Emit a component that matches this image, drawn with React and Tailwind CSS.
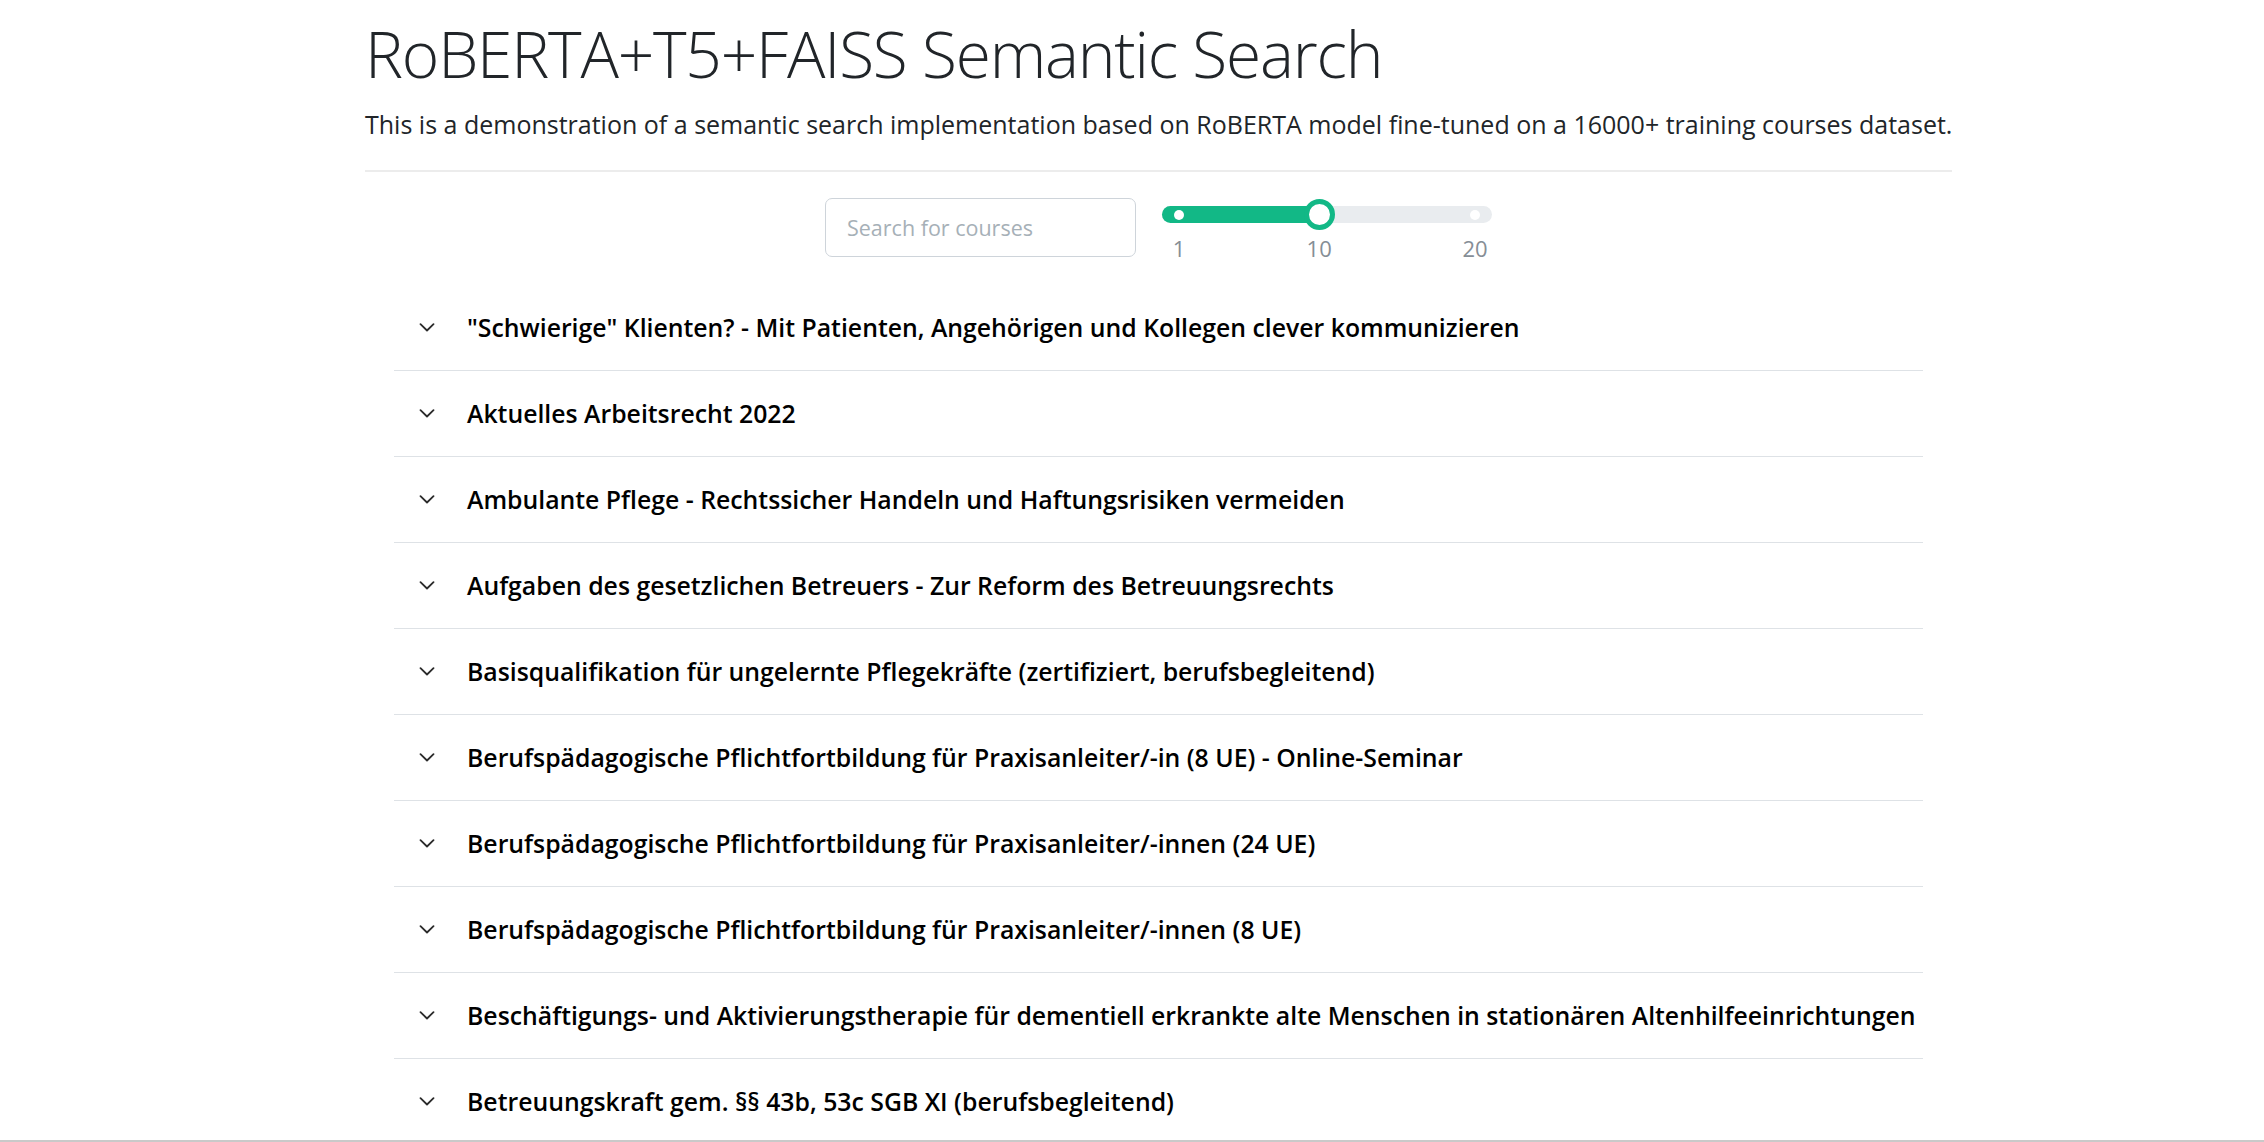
import React, { useState } from "react";

const courses = [
  "\"Schwierige\" Klienten? - Mit Patienten, Angehörigen und Kollegen clever kommunizieren",
  "Aktuelles Arbeitsrecht 2022",
  "Ambulante Pflege - Rechtssicher Handeln und Haftungsrisiken vermeiden",
  "Aufgaben des gesetzlichen Betreuers - Zur Reform des Betreuungsrechts",
  "Basisqualifikation für ungelernte Pflegekräfte (zertifiziert, berufsbegleitend)",
  "Berufspädagogische Pflichtfortbildung für Praxisanleiter/-in (8 UE) - Online-Seminar",
  "Berufspädagogische Pflichtfortbildung für Praxisanleiter/-innen (24 UE)",
  "Berufspädagogische Pflichtfortbildung für Praxisanleiter/-innen (8 UE)",
  "Beschäftigungs- und Aktivierungstherapie für dementiell erkrankte alte Menschen in stationären Altenhilfeeinrichtungen",
  "Betreuungskraft gem. §§ 43b, 53c SGB XI (berufsbegleitend)",
];

const Chevron = () => (
  <svg width="16" height="9" viewBox="0 0 16 9" fill="none" className="shrink-0">
    <path d="M1.5 1.2 L8 7.5 L14.5 1.2" stroke="#2b2b2b" strokeWidth="1.8" strokeLinecap="round" strokeLinejoin="round" />
  </svg>
);

const Slider = ({ value }) => {
  const min = 1, max = 20;
  const pct = ((value - min) / (max - min)) * 100;
  return (
    <div className="w-[330px]">
      <div className="relative h-[17px] mt-[8px] rounded-full bg-[#e9ecef]">
        <div className="absolute inset-y-0 left-0 rounded-full bg-[#12b886]" style={{ width: `calc(17px + ${pct} * 2.97px)` }} />
        <div className="absolute inset-y-0 left-[17px] right-[17px]">
          {[1, 10, 20].map(m => (
            <div key={m} className="absolute top-1/2 w-[10px] h-[10px] -ml-[5px] -mt-[5px] rounded-full bg-white" style={{ left: `${((m - min) / (max - min)) * 100}%` }} />
          ))}
          <div className="absolute top-1/2 w-[31px] h-[31px] -ml-[15.5px] -mt-[15.5px] rounded-full bg-white border-[5px] border-[#12b886]" style={{ left: `${pct}%` }} />
        </div>
      </div>
      <div className="relative h-[30px] mx-[17px] mt-[10px]">
        {[1, 10, 20].map(m => (
          <span key={m} className="absolute top-0 -translate-x-1/2 text-[22px] leading-[30px] text-[#868e96]" style={{ left: `${((m - min) / (max - min)) * 100}%` }}>{m}</span>
        ))}
      </div>
    </div>
  );
};

export default function App() {
  const [query, setQuery] = useState("");
  return (
    <div className="h-[1142px] overflow-hidden bg-white border-b-2 border-[#c9c9c9] text-[#212529]" style={{ fontFamily: '"Open Sans", "Noto Sans", sans-serif' }}>
      <div className="ml-[365px] w-[1587px]">
        <h1 className="pt-[14px] text-[64px] leading-[79px] font-light tracking-[-1.2px]">RoBERTA+T5+FAISS Semantic Search</h1>
        <p className="mt-[13px] text-[25px] leading-[36px] whitespace-nowrap">This is a demonstration of a semantic search implementation based on RoBERTA model fine-tuned on a 16000+ training courses dataset.</p>
        <div className="mt-[28px] h-[2px] bg-[#ececec]" />
        <div className="mt-[26px] flex justify-center gap-[26px]">
          <input
            value={query}
            onChange={e => setQuery(e.target.value)}
            placeholder="Search for courses"
            className="w-[311px] h-[59px] px-[21px] rounded-[7px] border border-[#ced4da] text-[21.5px] outline-none placeholder:text-[#a6b0b7]"
          />
          <Slider value={10} />
        </div>
        <div className="mt-[22px] mx-[29px]">
          {courses.map(c => (
            <div key={c} className="h-[86px] flex items-center gap-[32px] pl-[25px] border-b border-[#dee2e6]">
              <Chevron />
              <span className="text-[24.8px] font-semibold text-black whitespace-nowrap">{c}</span>
            </div>
          ))}
        </div>
      </div>
    </div>
  );
}
